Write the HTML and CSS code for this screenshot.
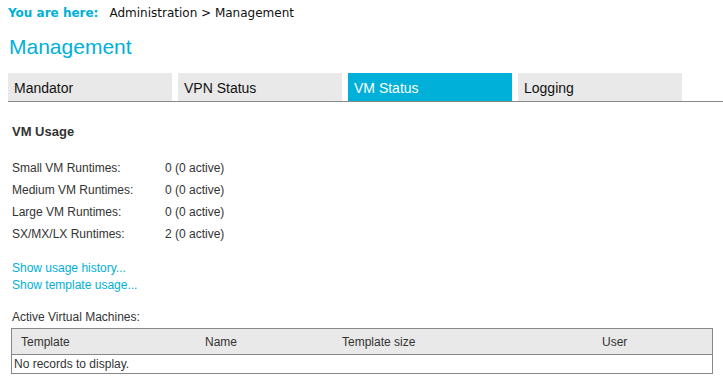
FILE: index.html
```html
<!DOCTYPE html>
<html>

<head>
    <meta charset="utf-8" />
    <title>Management</title>
    <link rel="stylesheet" href="styles.css">
</head>

<body>
    <div class="breadcrumb">
        <span class="here">You are here:</span>
        <span class="path">Administration &gt; Management</span>
    </div>

    <h1 class="page-title">Management</h1>

    <div class="tabs">
        <div class="tab">Mandator</div>
        <div class="tab">VPN Status</div>
        <div class="tab active">VM Status</div>
        <div class="tab">Logging</div>
    </div>

    <div class="content">
        <h2 class="section-title">VM Usage</h2>

        <div class="usage">
            <div class="usage-row"><span class="label">Small VM Runtimes:</span><span>0 (0 active)</span></div>
            <div class="usage-row"><span class="label">Medium VM Runtimes:</span><span>0 (0 active)</span></div>
            <div class="usage-row"><span class="label">Large VM Runtimes:</span><span>0 (0 active)</span></div>
            <div class="usage-row"><span class="label">SX/MX/LX Runtimes:</span><span>2 (0 active)</span></div>
        </div>

        <div class="links">
            <a href="#">Show usage history...</a>
            <a href="#">Show template usage...</a>
        </div>

        <div class="active-label">Active Virtual Machines:</div>
    </div>

    <table class="grid">
        <thead>
            <tr>
                <th class="col-template">Template</th>
                <th class="col-name">Name</th>
                <th class="col-size">Template size</th>
                <th>User</th>
            </tr>
        </thead>
        <tbody>
            <tr>
                <td colspan="4">No records to display.</td>
            </tr>
        </tbody>
    </table>
</body>

</html>
```

FILE: styles.css
```css
body {
    margin: 0;
    padding: 0 0 0 8px;
    font-family: 'Liberation Sans', Arial, sans-serif;
    color: #222;
    background-color: white;
}

.breadcrumb {
    padding-top: 4px;
    height: 18px;
    font-size: 12px;
    font-family: 'DejaVu Sans', Verdana, sans-serif;
    display: flex;
    gap: 11px;
    align-items: center;
}

.here {
    color: #00b0d8;
    font-weight: bold;
}

.path {
    color: #111;
}

.page-title {
    margin: 10px 0 0 1px;
    font-size: 21px;
    font-weight: normal;
    color: #00b0d8;
    height: 29px;
    line-height: 29px;
}

.tabs {
    margin-top: 12px;
    display: flex;
    gap: 6px;
    border-bottom: 1px solid #888;
}

.tab {
    width: 158px;
    height: 28px;
    line-height: 30px;
    padding-left: 6px;
    background-color: #e9e9e9;
    font-size: 14px;
    color: #111;
}

.tab.active {
    background-color: #00b0d8;
    color: white;
}

.content {
    padding-left: 4px;
}

.section-title {
    margin: 22px 0 0 0;
    font-size: 13px;
    font-weight: bold;
    color: #333;
    height: 16px;
}

.usage {
    margin-top: 17px;
    font-size: 12px;
    color: #333;
}

.usage-row {
    height: 22px;
    line-height: 22px;
    display: flex;
}

.label {
    width: 153px;
}

.links {
    margin-top: 15px;
    display: flex;
    flex-direction: column;
    font-size: 12px;
}

.links a {
    color: #00b0d8;
    text-decoration: none;
    line-height: 17px;
}

.active-label {
    margin-top: 16px;
    font-size: 12px;
    color: #333;
}

.grid {
    margin: 4px 0 0 3px;
    width: 702px;
    border-collapse: collapse;
    border: 1px solid #888;
    font-size: 12px;
    color: #333;
}

.grid th {
    height: 25px;
    text-align: left;
    font-weight: normal;
    background-color: #e9e9e9;
    border-bottom: 1px solid #888;
    padding: 0 0 0 9px;
}

.col-template {
    width: 175px;
}

.col-name {
    width: 128px;
}

.col-size {
    width: 251px;
}

.grid td {
    height: 18px;
    padding: 0 0 0 2px;
}
```
